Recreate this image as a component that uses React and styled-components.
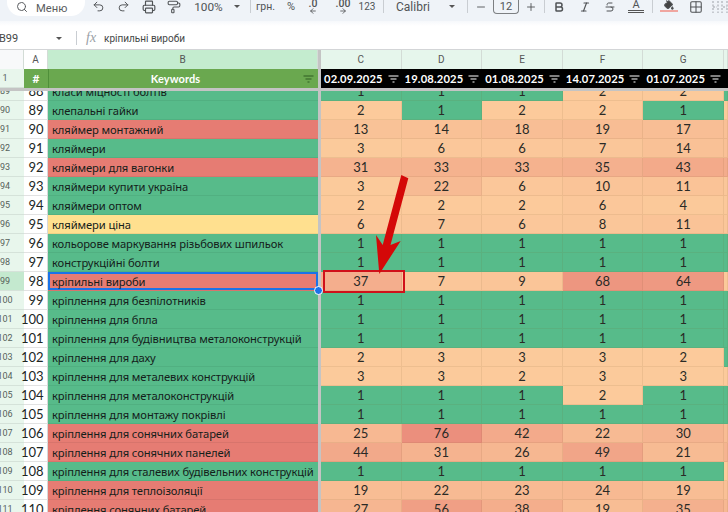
import React from "react";
import styled, { createGlobalStyle } from "styled-components";
import {
  Search,
  Undo2,
  Redo2,
  Printer,
  PaintRoller,
  Minus,
  Plus,
  Bold,
  Italic,
  Strikethrough,
  PaintBucket,
  Grid2x2,
  ArrowLeft,
  ArrowRight,
} from "lucide-react";

const GRID_COLS = "24px 24px 270px 3px repeat(5, 80.6px) 1fr";
const CELL_FONT = `Lato, "Noto Sans", "Liberation Sans", sans-serif`;
const UI_FONT = `Roboto, "Noto Sans", sans-serif`;

const Global = createGlobalStyle`
  html, body {
    margin: 0;
    padding: 0;
    background: #fff;
  }
`;

const Page = styled.div`
  position: relative;
  width: 728px;
  height: 512px;
  overflow: hidden;
  background: #fff;
  font-family: ${UI_FONT};
`;

const Toolbar = styled.div`
  display: flex;
  align-items: flex-start;
  height: 21px;
  padding-left: 7px;
  background: #eff3f8;
  color: #444746;
  font-size: 12px;
  white-space: nowrap;
`;

const MenuPill = styled.div`
  display: flex;
  align-items: center;
  gap: 8px;
  width: 80px;
  height: 16px;
  padding-left: 9px;
  box-sizing: border-box;
  background: #fff;
  border-radius: 0 0 14px 14px;
  font-size: 11.2px;
  color: #5a5d60;
  svg {
    margin-top: -2px;
    flex: none;
  }
`;

const Tool = styled.div`
  display: flex;
  align-items: center;
  justify-content: ${(p) => (p.$left ? "flex-start" : "center")};
  flex: none;
  position: relative;
  width: ${(p) => p.$w}px;
  height: 13px;
  margin-left: ${(p) => p.$ml || 0}px;
  font-size: ${(p) => p.$size || 11}px;
  color: ${(p) => p.$color || "#505356"};
`;

const Sep = styled.div`
  flex: none;
  width: 1px;
  height: 13px;
  margin-left: ${(p) => p.$ml}px;
  background: #c9cdd2;
`;

const Caret = styled.div`
  width: 0;
  height: 0;
  border-left: 3.5px solid transparent;
  border-right: 3.5px solid transparent;
  border-top: 3.5px solid #555;
`;

const SizeBox = styled(Tool)`
  height: 14px;
  box-sizing: border-box;
  border: 1px solid #7c7f82;
  border-top: none;
  border-radius: 0 0 4px 4px;
`;

const DecimalStack = styled.div`
  display: flex;
  flex-direction: column;
  align-items: center;
  font-size: 10.5px;
  font-weight: 500;
  line-height: 9px;
  svg {
    margin-top: -1px;
  }
`;

const LetterA = styled.div`
  font-size: 11px;
  line-height: 9px;
  text-align: center;
  width: 18px;
  padding-bottom: 1px;
  border-bottom: 3px double #555;
`;

const BucketWrap = styled.div`
  display: flex;
  flex-direction: column;
  align-items: center;
  width: 18px;
  svg {
    margin-top: -2px;
  }
  &::after {
    content: "";
    width: 18px;
    height: 2px;
    background: #f0a6a0;
  }
`;

const FormulaBar = styled.div`
  display: flex;
  align-items: center;
  height: 29px;
  padding-top: 6px;
  box-sizing: border-box;
  background: linear-gradient(#f6f8fb, #fff 5px);
  border-bottom: 1px solid #d3d5d7;
  color: #444746;
  font-size: 10px;
`;

const NameBox = styled.div`
  width: 53px;
  margin-left: -1px;
  font-size: 11px;
`;

const FormulaSep = styled.div`
  width: 1px;
  height: 14px;
  margin-left: 10px;
  background: #c9cdd2;
`;

const FxMark = styled.div`
  width: 13px;
  margin-left: 9px;
  margin-right: 5px;
  font-family: "Liberation Serif", serif;
  font-style: italic;
  font-size: 14px;
  color: #9aa0a6;
`;

const GridRow = styled.div`
  display: grid;
  grid-template-columns: ${GRID_COLS};
  height: 19px;
  overflow: ${(p) => (p.$open ? "visible" : "hidden")};
`;

const LetterCell = styled.div`
  display: flex;
  align-items: center;
  justify-content: center;
  background: ${(p) => p.$bg};
  border-right: 1px solid #d3dcd6;
  box-sizing: border-box;
  font-size: 10px;
  color: #555;
`;

const RowHead = styled.div`
  display: flex;
  align-items: center;
  justify-content: center;
  padding-right: 14px;
  box-sizing: border-box;
  background: ${(p) => (p.$active ? "#c4e9cf" : "#e8f6ec")};
  border-bottom: 1px solid #d5e2d9;
  font-size: 9px;
  color: #56615b;
  white-space: nowrap;
`;

const IndexCell = styled.div`
  display: flex;
  align-items: center;
  justify-content: flex-end;
  padding-right: 3.5px;
  box-sizing: border-box;
  background: #fff;
  border-bottom: 1px solid #e2e2e2;
  border-right: 1px solid #d8d8d8;
  font-family: ${CELL_FONT};
  font-size: 13px;
  color: #20261f;
`;

const HashCell = styled.div`
  display: flex;
  align-items: center;
  justify-content: center;
  background: #6aa84f;
  font-family: ${CELL_FONT};
  font-size: 12px;
  font-weight: 700;
  color: #fff;
`;

const KeywordsHead = styled.div`
  position: relative;
  display: flex;
  align-items: center;
  justify-content: center;
  padding-right: 16px;
  background: #6aa84f;
  border-left: 1px solid #4f8f3a;
  font-family: ${CELL_FONT};
  font-size: 11px;
  font-weight: 700;
  letter-spacing: 0.1px;
  color: #fff;
  svg {
    position: absolute;
    right: 4px;
    top: 6px;
  }
`;

const DateHead = styled.div`
  display: flex;
  align-items: center;
  justify-content: space-between;
  padding: 0 3px 0 3px;
  background: #000;
  font-family: ${CELL_FONT};
  font-size: 11.2px;
  font-weight: 700;
  letter-spacing: 0.15px;
  color: #fff;
  overflow: hidden;
`;

const FreezeCol = styled.div`
  background: #c4c4c4;
`;

const FreezeRow = styled.div`
  height: 3px;
  background: #c4c4c4;
`;

const Body = styled.div`
  height: 421px;
  overflow: hidden;
`;

const Scroller = styled.div`
  margin-top: -9px;
`;

const keywordBg = { g: "#57bb8a", r: "#e67c73", y: "#ffe08f" };

const KeywordCell = styled.div`
  position: relative;
  display: flex;
  align-items: center;
  padding-left: 4px;
  background: ${(p) => keywordBg[p.$tone]};
  border-bottom: 1px solid rgba(0, 0, 0, 0.06);
  box-sizing: border-box;
  font-family: "Noto Sans", sans-serif;
  font-size: 11.2px;
  letter-spacing: -0.1px;
  color: #14201a;
  white-space: nowrap;
  ${(p) =>
    p.$selected &&
    `
    box-shadow: inset 0 0 0 2px #1a73e8;
  `}
`;

const Handle = styled.div`
  position: absolute;
  right: -5px;
  bottom: -5px;
  width: 7px;
  height: 7px;
  background: #1a73e8;
  border: 1px solid #fff;
  border-radius: 50%;
  z-index: 3;
`;

// green for 1, then peach running into red as the number grows
const scale = (v) => {
  if (v <= 1) return "#57bb8a";
  const t = Math.min(v, 100) / 100;
  const mix = (a, b) => Math.round(a + (b - a) * t);
  return `rgb(${mix(252, 230)}, ${mix(204, 124)}, ${mix(156, 115)})`;
};

const ValueCell = styled.div`
  position: relative;
  display: flex;
  align-items: center;
  justify-content: center;
  background: ${(p) => scale(p.$v)};
  border-right: 1px solid rgba(120, 90, 40, 0.1);
  border-bottom: 1px solid rgba(120, 90, 40, 0.1);
  box-sizing: border-box;
  font-family: ${CELL_FONT};
  font-size: 13px;
  color: #2a2a26;
`;

const MarkedBox = styled.div`
  position: absolute;
  left: 2px;
  top: -2px;
  width: 82px;
  height: 23px;
  box-sizing: border-box;
  border: 2.5px solid #d0101a;
  z-index: 2;
`;

const Arrow = styled.svg`
  position: absolute;
  left: 370px;
  top: 170px;
  z-index: 4;
`;

const FilterSvg = styled.svg`
  flex: none;
`;

const rows = [
  [89, 88, "класи міцності болтів", "g", [1, 1, 1, 2, 2, 1]],
  [90, 89, "клепальні гайки", "g", [2, 1, 2, 2, 1, 2]],
  [91, 90, "кляймер монтажний", "r", [13, 14, 18, 19, 17, 15]],
  [92, 91, "кляймери", "g", [3, 6, 6, 7, 14, 15]],
  [93, 92, "кляймери для вагонки", "r", [31, 33, 33, 35, 43, 40]],
  [94, 93, "кляймери купити україна", "g", [3, 22, 6, 10, 11, 8]],
  [95, 94, "кляймери оптом", "g", [2, 2, 2, 6, 4, 5]],
  [96, 95, "кляймери ціна", "y", [6, 7, 6, 8, 11, 8]],
  [97, 96, "кольорове маркування різьбових шпильок", "g", [1, 1, 1, 1, 1, 1]],
  [98, 97, "конструкційні болти", "g", [1, 1, 1, 1, 1, 1]],
  [99, 98, "кріпильні вироби", "r", [37, 7, 9, 68, 64, 4]],
  [100, 99, "кріплення для безпілотників", "g", [1, 1, 1, 1, 1, 1]],
  [101, 100, "кріплення для бпла", "g", [1, 1, 1, 1, 1, 1]],
  [102, 101, "кріплення для будівництва металоконструкцій", "g", [1, 1, 1, 1, 1, 1]],
  [103, 102, "кріплення для даху", "g", [2, 3, 3, 3, 2, 1]],
  [104, 103, "кріплення для металевих конструкцій", "g", [3, 3, 2, 3, 3, 3]],
  [105, 104, "кріплення для металоконструкцій", "g", [1, 1, 1, 2, 1, 1]],
  [106, 105, "кріплення для монтажу покрівлі", "g", [1, 1, 1, 1, 1, 1]],
  [107, 106, "кріплення для сонячних батарей", "r", [25, 76, 42, 22, 30, 20]],
  [108, 107, "кріплення для сонячних панелей", "r", [44, 31, 26, 49, 21, 30]],
  [109, 108, "кріплення для сталевих будівельних конструкцій", "g", [1, 1, 1, 1, 1, 2]],
  [110, 109, "кріплення для теплоізоляції", "r", [19, 22, 23, 24, 19, 15]],
  [111, 110, "кріплення сонячних батарей", "r", [27, 56, 38, 19, 35, 25]],
];

const dates = ["02.09.2025", "19.08.2025", "01.08.2025", "14.07.2025", "01.07.2025"];

function FilterIcon({ color }) {
  return (
    <FilterSvg width="11" height="8" viewBox="0 0 11 8" fill="none" stroke={color} strokeWidth="1">
      <path d="M0.5 1h10M2.5 4h6M4.5 7h2" />
    </FilterSvg>
  );
}

function MergeIcon() {
  return (
    <svg width="16" height="14" viewBox="0 0 16 14" fill="none" stroke="#b9bdc2" strokeWidth="1.5" strokeDasharray="2 1.5">
      <path d="M1 1v12M6 1v12M10 1v12M15 1v12M1 7h4M11 7h4" />
    </svg>
  );
}

function ToolBar() {
  return (
    <Toolbar>
      <MenuPill>
        <Search size={12} strokeWidth={2} />
        Меню
      </MenuPill>
      <Tool $w={25} $ml={1}><Undo2 size={13} strokeWidth={1.8} /></Tool>
      <Tool $w={25}><Redo2 size={13} strokeWidth={1.8} /></Tool>
      <Tool $w={25}><Printer size={14} strokeWidth={2} /></Tool>
      <Tool $w={25}><PaintRoller size={14} strokeWidth={1.8} /></Tool>
      <Tool $w={45} $size={11.8}>100%</Tool>
      <Tool $w={11}><Caret /></Tool>
      <Sep $ml={8} />
      <Tool $w={19} $ml={5} $size={10.5}>грн.</Tool>
      <Tool $w={16} $ml={8}>%</Tool>
      <Tool $w={18} $ml={5}>
        <DecimalStack>.0<ArrowLeft size={8} strokeWidth={2.5} /></DecimalStack>
      </Tool>
      <Tool $w={22} $ml={10}>
        <DecimalStack>.00<ArrowRight size={8} strokeWidth={2.5} /></DecimalStack>
      </Tool>
      <Tool $w={18} $ml={4} $size={10}>123</Tool>
      <Sep $ml={7} />
      <Tool $w={40} $ml={12} $left $size={12}>Calibri</Tool>
      <Tool $w={12} $ml={10}><Caret /></Tool>
      <Sep $ml={9} />
      <Tool $w={14} $ml={6}><Minus size={12} strokeWidth={1.8} /></Tool>
      <SizeBox $w={26} $ml={5}>12</SizeBox>
      <Tool $w={14} $ml={5}><Plus size={12} strokeWidth={1.8} /></Tool>
      <Sep $ml={6} />
      <Tool $w={14} $ml={7}><Bold size={12} strokeWidth={3} /></Tool>
      <Tool $w={14} $ml={12}><Italic size={12} strokeWidth={2.4} /></Tool>
      <Tool $w={14} $ml={11}><Strikethrough size={12} strokeWidth={2} /></Tool>
      <Tool $w={16} $ml={11}><LetterA>A</LetterA></Tool>
      <Sep $ml={8} />
      <Tool $w={18} $ml={7}>
        <BucketWrap><PaintBucket size={10} strokeWidth={2.6} fill="#444" /></BucketWrap>
      </Tool>
      <Tool $w={16} $ml={10}><Grid2x2 size={14} strokeWidth={1.8} /></Tool>
      <Tool $w={16} $ml={8}><MergeIcon /></Tool>
    </Toolbar>
  );
}

function DataRow({ head, index, name, tone, values }) {
  const selected = head === 99;
  return (
    <GridRow $open={selected}>
      <RowHead $active={selected}>{head}</RowHead>
      <IndexCell>{index}</IndexCell>
      <KeywordCell $tone={tone} $selected={selected}>
        {name}
        {selected && <Handle />}
      </KeywordCell>
      <FreezeCol />
      {values.map((v, i) => (
        <ValueCell key={i} $v={v}>
          {i < 5 && v}
          {selected && i === 0 && <MarkedBox />}
        </ValueCell>
      ))}
    </GridRow>
  );
}

export default function App() {
  return (
    <Page>
      <Global />
      <ToolBar />
      <FormulaBar>
        <NameBox>B99</NameBox>
        <Tool $w={14}><Caret /></Tool>
        <FormulaSep />
        <FxMark>fx</FxMark>
        кріпильні вироби
      </FormulaBar>
      <GridRow>
        <LetterCell $bg="#f8f9fa" />
        <LetterCell $bg="#fff">A</LetterCell>
        <LetterCell $bg="#c4eccf">B</LetterCell>
        <FreezeCol />
        {["C", "D", "E", "F", "G", ""].map((c, i) => (
          <LetterCell key={i} $bg="#e6f6ec">{c}</LetterCell>
        ))}
      </GridRow>
      <GridRow>
        <RowHead>1</RowHead>
        <HashCell>#</HashCell>
        <KeywordsHead>
          Keywords
          <FilterIcon color="#2f5d22" />
        </KeywordsHead>
        <FreezeCol />
        {dates.map((d) => (
          <DateHead key={d}>
            {d}
            <FilterIcon color="#fff" />
          </DateHead>
        ))}
        <DateHead />
      </GridRow>
      <FreezeRow />
      <Body>
        <Scroller>
          {rows.map(([head, index, name, tone, values]) => (
            <DataRow key={head} head={head} index={index} name={name} tone={tone} values={values} />
          ))}
        </Scroller>
      </Body>
      <Arrow width="50" height="110" viewBox="370 170 50 110">
        <path d="M401.3 175L408.3 178.3L390.5 245L400.7 241L379.3 274L376 235L382.7 245Z" fill="#d40808" />
      </Arrow>
    </Page>
  );
}
